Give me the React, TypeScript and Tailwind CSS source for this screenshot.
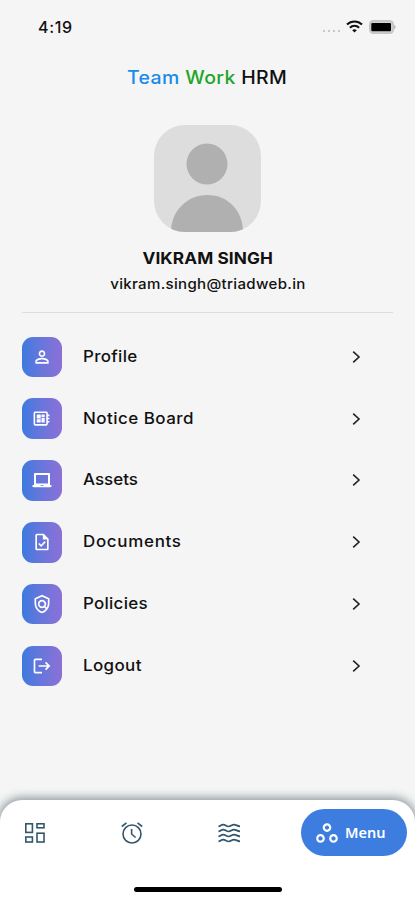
import type { ReactNode } from "react"
import {
  MdLogout,
  MdOutlineDeveloperBoard,
  MdOutlinePolicy,
  MdOutlineTask,
  MdOutlineWorkspaces,
  MdPersonOutline,
} from "react-icons/md"

type MenuItem = {
  label: string
  tracking: string
  icon: ReactNode
}

const items: MenuItem[] = [
  { label: "Profile", tracking: "tracking-[0.3px]", icon: <MdPersonOutline size={20} /> },
  { label: "Notice Board", tracking: "tracking-[0.45px]", icon: <MdOutlineDeveloperBoard size={19} /> },
  { label: "Assets", tracking: "tracking-[0px]", icon: <LaptopIcon /> },
  { label: "Documents", tracking: "tracking-[0.65px]", icon: <MdOutlineTask size={20} /> },
  { label: "Policies", tracking: "tracking-[0.25px]", icon: <MdOutlinePolicy size={20} /> },
  { label: "Logout", tracking: "tracking-[0.35px]", icon: <MdLogout size={20} /> },
]

function LaptopIcon() {
  return (
    <svg width="20" height="16" viewBox="0 0 20 16" fill="currentColor">
      <path fillRule="evenodd" d="M3.2 1h13.6c.8 0 1.2.5 1.2 1.2V13H2V2.2C2 1.5 2.4 1 3.2 1ZM4 3v8.4h12V3Z" />
      <path fillRule="evenodd" d="M.5 13h19v1c0 .8-.4 1.2-1.2 1.2H1.7C.9 15.2.5 14.8.5 14Zm8 .2v.9h3v-.9Z" />
    </svg>
  )
}

function DashboardIcon() {
  return (
    <svg width="20" height="20" viewBox="0 0 20 20" fill="none" stroke="currentColor" strokeWidth="1.6">
      <rect x=".8" y=".8" width="6.6" height="8.6" />
      <rect x="12" y=".8" width="7" height="4" />
      <rect x=".8" y="14" width="6.6" height="5" />
      <rect x="12" y="10.2" width="7" height="8.8" />
    </svg>
  )
}

function AlarmIcon() {
  return (
    <svg width="22" height="22" viewBox="0 0 22 22" fill="none" stroke="currentColor" strokeWidth="1.6">
      <circle cx="11" cy="12" r="9" />
      <path d="M10.6 7v5l4 3.5M.8 4.500 5.500.8M16.500.8l4.700 3.700" />
    </svg>
  )
}

function WavesIcon() {
  return (
    <svg width="23" height="20" viewBox="0 0 23 20" fill="none" stroke="currentColor" strokeWidth="1.7">
      {[2.5, 7.5, 12.5, 17.5].map((y) => (
        <path key={y} d={`M.5 ${y + 0.8}c2-.1 2.6-1.7 4.7-1.7s3.2 1.9 5.4 1.9 3.2-1.9 5.4-1.9 3.3 1.7 6 1.7`} />
      ))}
    </svg>
  )
}

function StatusBar() {
  return (
    <div className="flex h-[54px] items-center justify-between pr-[19px] pl-[38px]">
      <span className="text-[16px] font-medium tracking-[0.7px]">4:19</span>
      <div className="flex items-center">
        <div className="mt-[8px] mr-[6px] flex gap-[3px]">
          <i className="size-[2px] rounded-full bg-[#b8b8b8]" />
          <i className="size-[2px] rounded-full bg-[#b8b8b8]" />
          <i className="size-[2px] rounded-full bg-[#b8b8b8]" />
          <i className="size-[2px] rounded-full bg-[#b8b8b8]" />
        </div>
        <svg className="mr-[6px] -mt-px" width="17" height="13" viewBox="0 0 17 13" fill="none" stroke="#111" strokeWidth="2.1">
          <path d="M1 4.6a10.6 10.6 0 0 1 15 0M3.9 7.7a6.5 6.5 0 0 1 9.2 0" />
          <path d="M8.5 12.6 6.2 10.3a3.3 3.3 0 0 1 4.6 0Z" fill="#111" stroke="none" />
        </svg>
        <svg width="27" height="14" viewBox="0 0 27 14">
          <rect x=".9" y=".9" width="23.2" height="12.2" rx="3.4" fill="#d2d2d2" stroke="#c6c6c6" strokeWidth="1.8" />
          <rect x="2.3" y="3" width="19.7" height="8.2" rx="1" />
          <path d="M25.2 4.8c1.8.8 1.8 3.6 0 4.400Z" fill="#aaa" />
        </svg>
      </div>
    </div>
  )
}

function Avatar() {
  return (
    <div className="mt-[35px] size-[107px] overflow-hidden rounded-[31px] bg-[#dddddd]">
      <svg width="107" height="107" viewBox="0 0 107 107" fill="#b0b0b0">
        <circle cx="53" cy="39" r="20.5" />
        <path d="M17 107c0-21 16-37 36.5-37S89 86 89 107Z" />
      </svg>
    </div>
  )
}

export default function App() {
  return (
    <div className="flex h-[900px] w-[415px] flex-col overflow-hidden bg-[#f5f5f5] font-[Inter,sans-serif] text-[#111]">
      <StatusBar />
      <header className="flex flex-col items-center">
        <h1 className="mt-[12px] scale-x-[1.08] text-[18px] leading-6 font-medium tracking-[0.35px] whitespace-nowrap">
          <span className="text-[#168bea]">Team</span> <span className="text-[#22a52b]">Work</span> HRM
        </h1>
        <Avatar />
        <h2 className="mt-[16px] scale-x-[1.075] text-[16px] leading-5 font-bold tracking-[0.1px]">VIKRAM SINGH</h2>
        <p className="mt-[6px] scale-x-[1.075] text-[14px] leading-5 font-medium tracking-[0.3px]">
          vikram.singh@triadweb.in
        </p>
      </header>
      <hr className="mx-[22px] mt-[18px] border-[#dddddd]" />

      <ul className="mt-[13px] flex-1">
        {items.map((item) => (
          <li key={item.label} className="flex h-[61.8px] items-center pr-[54px] pl-[21.5px]">
            <div className="flex size-[40.5px] items-center justify-center rounded-[11px] bg-linear-to-r from-[#3a7adf] to-[#8b70d7] text-white">
              {item.icon}
            </div>
            <span
              className={`-mt-[2px] ml-[21px] flex-1 origin-left scale-x-[1.06] text-[16px] font-medium ${item.tracking}`}
            >
              {item.label}
            </span>
            <svg width="9" height="12" viewBox="0 0 9 12" fill="none" stroke="#222" strokeWidth="1.6">
              <path d="m1.200.6 5.800 5.400-5.800 5.400" />
            </svg>
          </li>
        ))}
      </ul>

      <nav className="h-[100px] rounded-t-[22px] bg-white shadow-[0_-1px_9px_2px_rgba(70,90,100,0.55)]">
        <div className="flex h-[65px] items-center pr-[8px] pl-[25px] text-[#34566b]">
          <DashboardIcon />
          <div className="ml-[76px]">
            <AlarmIcon />
          </div>
          <div className="ml-[75px]">
            <WavesIcon />
          </div>
          <button className="ml-auto flex h-[47px] w-[106px] items-center rounded-full bg-[#3d7de0] pl-[13px] text-white">
            <MdOutlineWorkspaces size={26} />
            <span className="ml-[5px] font-['Noto_Sans',sans-serif] text-[14.5px] font-semibold">Menu</span>
          </button>
        </div>
        <div className="mx-auto mt-[21.500px] h-[5px] w-[148px] rounded-full bg-black" />
      </nav>
    </div>
  )
}
